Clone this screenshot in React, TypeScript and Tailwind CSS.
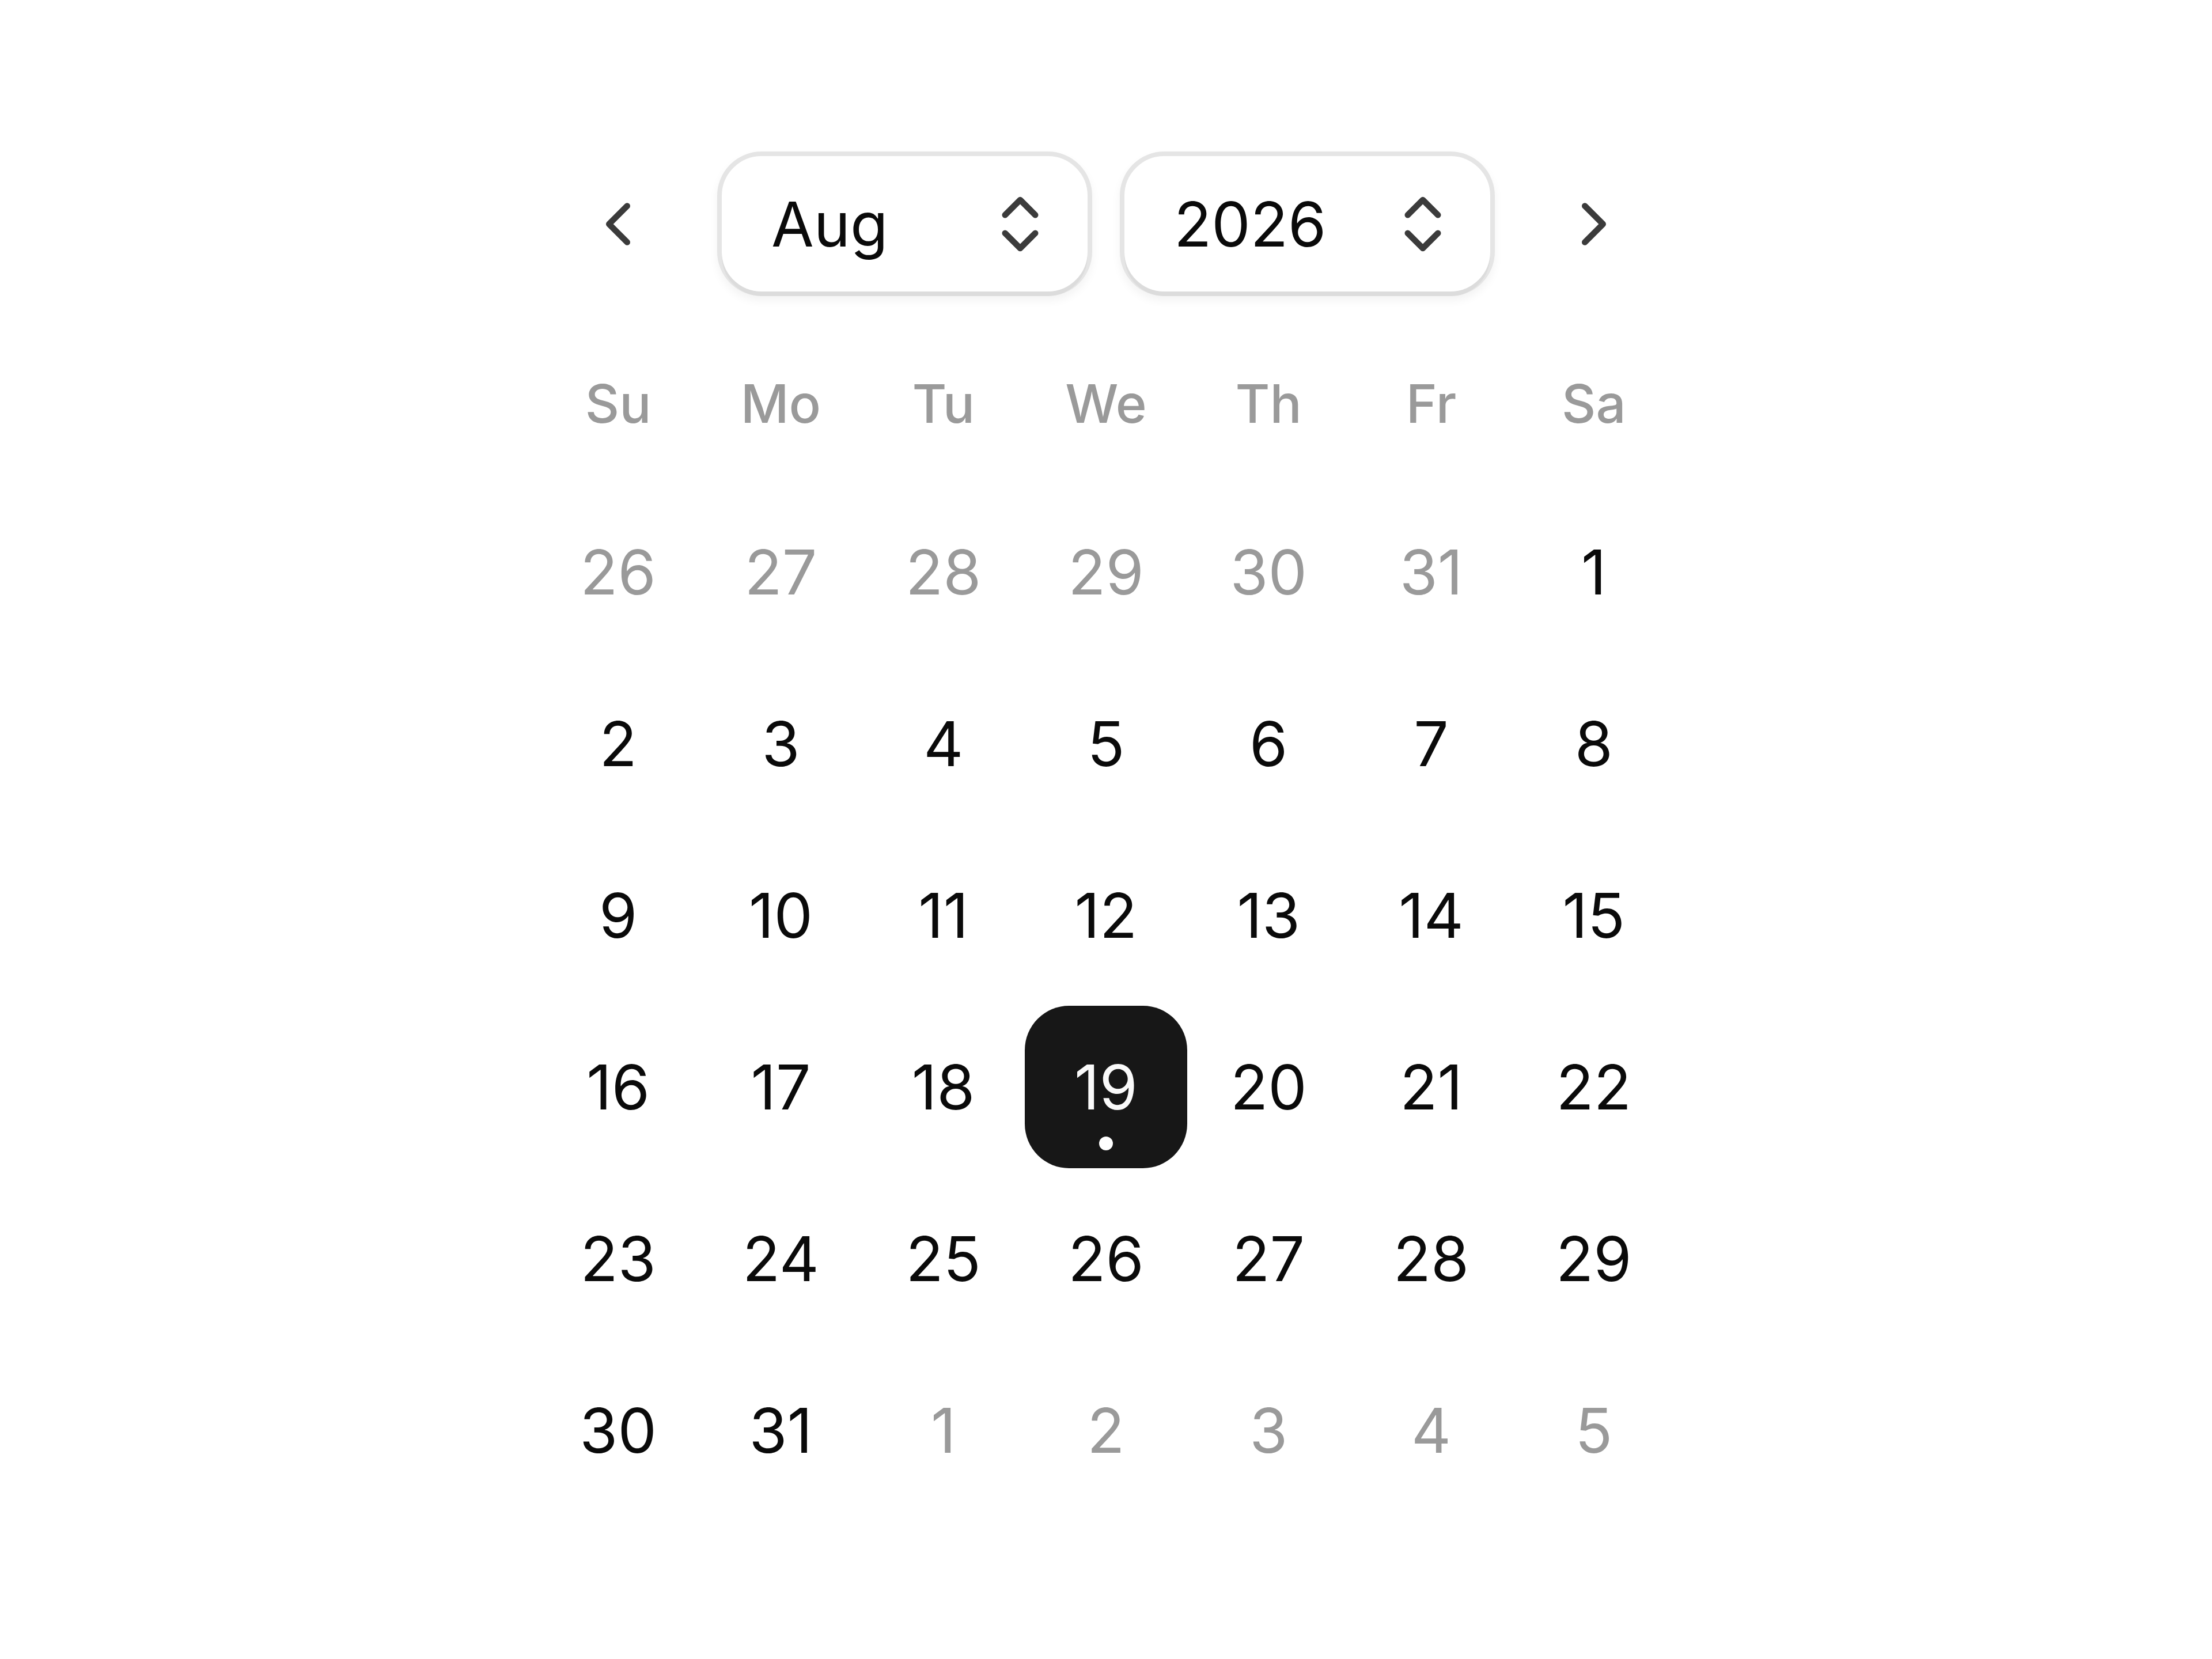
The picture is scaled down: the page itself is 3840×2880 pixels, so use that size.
import type { ReactNode } from "react";
import { ChevronLeft, ChevronRight } from "lucide-react";

type Day = { day: number; outside?: boolean; today?: boolean };

const weekdays = [
  { short: "Su", full: "Sunday" },
  { short: "Mo", full: "Monday" },
  { short: "Tu", full: "Tuesday" },
  { short: "We", full: "Wednesday" },
  { short: "Th", full: "Thursday" },
  { short: "Fr", full: "Friday" },
  { short: "Sa", full: "Saturday" },
];

const months = ["Jan", "Feb", "Mar", "Apr", "May", "Jun", "Jul", "Aug", "Sep", "Oct", "Nov", "Dec"];
const years = ["2024", "2025", "2026", "2027", "2028"];

// August 2026 starts on a Saturday, so six days of July lead the first week.
const days: Day[] = Array.from({ length: 42 }, (_, i) => {
  const n = i - 5;
  if (n < 1) return { day: n + 31, outside: true };
  if (n > 31) return { day: n - 31, outside: true };
  return { day: n, today: n === 19 };
});
const weeks = Array.from({ length: 6 }, (_, w) => days.slice(w * 7, w * 7 + 7));

function Picker({ label, value, options }: { label: string; value: string; options: string[] }) {
  return (
    <div className="relative h-[251px] min-w-0 flex-1">
      <select
        aria-label={label}
        defaultValue={value}
        className="h-full w-full appearance-none rounded-[77px] border-8 border-[#e5e5e5] bg-white pr-[196px] pl-[86px] text-[107px] leading-[160px] text-neutral-950 shadow-[0_8px_16px_0_rgba(0,0,0,0.05)] outline-none"
      >
        {options.map((o) => (
          <option key={o}>{o}</option>
        ))}
      </select>
      <span className="pointer-events-none absolute inset-2 rounded-[69px] shadow-[0_8px_0_0_rgba(0,0,0,0.04)]" />
      <svg
        aria-hidden="true"
        viewBox="0 0 24 24"
        className="pointer-events-none absolute inset-y-0 right-[62px] my-auto size-[126px] fill-none stroke-[#3b3b3b] stroke-2 [stroke-linecap:round] [stroke-linejoin:round]"
      >
        <path d="m7 15 5 5 5-5" />
        <path d="m7 9 5-5 5 5" />
      </svg>
    </div>
  );
}

function NavButton({ label, children }: { label: string; children: ReactNode }) {
  return (
    <button
      type="button"
      aria-label={label}
      className="flex w-[282px] shrink-0 items-center justify-center rounded-[77px] text-[#3b3b3b]"
    >
      {children}
    </button>
  );
}

function DayButton({ day, outside, today }: Day) {
  const tone = today
    ? "bg-neutral-900 text-neutral-50"
    : outside
      ? "text-[#9a9a9a]"
      : "text-neutral-950";
  return (
    <button
      type="button"
      aria-pressed={today}
      className={`relative flex h-[282px] w-full items-center justify-center rounded-[77px] text-[107px] leading-[160px] ${tone}`}
    >
      {day}
      {today && (
        <span className="absolute inset-x-0 bottom-[31px] mx-auto size-6 rounded-full bg-white" />
      )}
    </button>
  );
}

export default function App() {
  return (
    <main className="min-h-screen bg-white px-8 pt-[247px] pb-[256px] font-['Inter',sans-serif]">
      <div className="mx-auto w-full max-w-[1976px]">
        <nav aria-label="Month" className="flex h-[283px] gap-[31px]">
          <NavButton label="Previous month">
            <ChevronLeft className="size-[126px]" />
          </NavButton>
          <div className="flex min-w-0 flex-1 items-center gap-12">
            <Picker label="Month" value="Aug" options={months} />
            <Picker label="Year" value="2026" options={years} />
          </div>
          <NavButton label="Next month">
            <ChevronRight className="size-[126px]" />
          </NavButton>
        </nav>
        <table className="mt-9 w-full table-fixed border-collapse" aria-label="August 2026">
          <thead>
            <tr>
              {weekdays.map((d) => (
                <th
                  key={d.short}
                  scope="col"
                  abbr={d.full}
                  className="h-[270px] p-0 text-center align-middle text-[92px] leading-[140px] font-medium text-[#9a9a9a]"
                >
                  {d.short}
                </th>
              ))}
            </tr>
          </thead>
          <tbody>
            {weeks.map((week, w) => (
              <tr key={w}>
                {week.map((d, i) => (
                  <td key={i} className="p-0 pt-4">
                    <DayButton {...d} />
                  </td>
                ))}
              </tr>
            ))}
          </tbody>
        </table>
      </div>
    </main>
  );
}
